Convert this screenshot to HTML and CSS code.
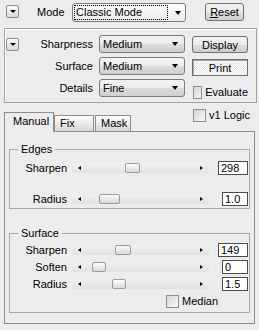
FILE: index.html
```html
<!DOCTYPE html>
<html lang="en">
<head>
    <meta charset="UTF-8">
    <meta name="viewport" content="width=device-width, initial-scale=1.0">
    <title>Sharpen</title>
    <link rel="stylesheet" href="styles.css">
</head>
<body>
    <div class="top-row">
        <button class="mini-drop"><span class="arrow-small"></span></button>
        <span class="mode-label">Mode</span>
        <div class="combo mode-combo">
            <span class="combo-text focus">Classic Mode</span>
            <span class="arrow-down"></span>
        </div>
        <button class="btn reset-btn"><u>R</u>eset</button>
    </div>

    <div class="panel">
        <button class="mini-drop panel-drop"><span class="arrow-small"></span></button>
        <div class="settings">
            <span class="set-label">Sharpness</span>
            <div class="combo"><span class="combo-text">Medium</span><span class="arrow-down"></span></div>
            <span class="set-label">Surface</span>
            <div class="combo"><span class="combo-text">Medium</span><span class="arrow-down"></span></div>
            <span class="set-label">Details</span>
            <div class="combo"><span class="combo-text">Fine</span><span class="arrow-down"></span></div>
        </div>
        <div class="side">
            <button class="btn display-btn">Display</button>
            <button class="btn print-btn">Print</button>
            <label class="check evaluate"><span class="box"></span>Evaluate</label>
        </div>
    </div>

    <div class="tab-head">
        <div class="tab active">Manual</div>
        <div class="tab fix">Fix</div>
        <div class="tab mask">Mask</div>
        <label class="check v1"><span class="box"></span>v1 Logic</label>
    </div>
    <div class="tab-page">
        <div class="group edges">
            <span class="group-title">Edges</span>
            <div class="row">
                <span class="row-label">Sharpen</span>
                <div class="slider"><span class="arr-left"></span><span class="thumb" style="left:53px;width:15px"></span><span class="arr-right"></span></div>
                <span class="value wide">298</span>
            </div>
            <div class="row radius-row">
                <span class="row-label">Radius</span>
                <div class="slider"><span class="arr-left"></span><span class="thumb" style="left:27px;width:21px"></span><span class="arr-right"></span></div>
                <span class="value">1.0</span>
            </div>
        </div>

        <div class="group surface">
            <span class="group-title">Surface</span>
            <div class="row">
                <span class="row-label">Sharpen</span>
                <div class="slider"><span class="arr-left"></span><span class="thumb" style="left:43px;width:16px"></span><span class="arr-right"></span></div>
                <span class="value wide">149</span>
            </div>
            <div class="row">
                <span class="row-label">Soften</span>
                <div class="slider"><span class="arr-left"></span><span class="thumb" style="left:20px;width:14px"></span><span class="arr-right"></span></div>
                <span class="value">0</span>
            </div>
            <div class="row">
                <span class="row-label">Radius</span>
                <div class="slider"><span class="arr-left"></span><span class="thumb" style="left:40px;width:14px"></span><span class="arr-right"></span></div>
                <span class="value">1.5</span>
            </div>
            <div class="row">
                <label class="check median"><span class="box"></span>Median</label>
            </div>
        </div>
    </div>
</body>
</html>
```

FILE: styles.css
```css
body {
    margin: 0;
    padding: 0;
    width: 259px;
    height: 330px;
    overflow: hidden;
    background: #ececec;
    font-family: "Liberation Sans", Arial, sans-serif;
    font-size: 11px;
    color: #000;
}
button {
    font-family: inherit;
    font-size: 11px;
    color: #000;
    padding: 0;
}
.top-row {
    display: flex;
    align-items: flex-start;
    height: 19px;
    padding: 3px 0 0 6px;
}
.mini-drop {
    width: 13px;
    height: 13px;
    margin-top: 2px;
    border: 1px solid #8a8a8a;
    border-radius: 2px;
    background: linear-gradient(#fbfbfb, #d9d9d9);
    display: flex;
    align-items: center;
    justify-content: center;
}
.arrow-small {
    width: 0;
    height: 0;
    border-left: 3px solid transparent;
    border-right: 3px solid transparent;
    border-top: 3px solid #000;
}
.arrow-down {
    width: 0;
    height: 0;
    border-left: 3.5px solid transparent;
    border-right: 3.5px solid transparent;
    border-top: 4px solid #000;
}
.mode-label {
    width: 35px;
    margin-left: 18px;
    line-height: 19px;
}
.combo {
    box-sizing: border-box;
    display: flex;
    align-items: center;
    border: 1px solid #7a7a7a;
    border-radius: 3px;
    background: linear-gradient(#f3f3f3 0%, #ebebeb 50%, #dcdcdc 51%, #cfcfcf 100%);
    padding: 0 6px 0 2px;
}
.combo-text {
    flex: 1;
    line-height: 13px;
    padding: 0 1px;
}
.mode-combo {
    width: 114px;
    height: 19px;
    background: linear-gradient(#fdfdfd, #eaeaea);
    padding-right: 4px;
}
.combo-text.focus {
    outline: 1px dotted #000;
    margin-right: 8px;
}
.btn {
    box-sizing: border-box;
    border: 1px solid #707070;
    border-radius: 3px;
    background: linear-gradient(#f2f2f2 0%, #ebebeb 50%, #dddddd 51%, #cfcfcf 100%);
    text-align: center;
}
.reset-btn {
    width: 39px;
    height: 18px;
    margin-left: 19px;
}
.panel {
    box-sizing: border-box;
    display: flex;
    align-items: flex-start;
    height: 75px;
    margin: 6px 2px 0 4px;
    padding: 6px 0 0 1px;
    border: 1px solid #a0a0a0;
    box-shadow: inset 1px 1px #fff;
}
.panel-drop {
    margin-top: 3px;
}
.settings {
    display: grid;
    grid-template-columns: 74px 86px;
    grid-auto-rows: 18px;
    column-gap: 6px;
    row-gap: 4px;
}
.set-label {
    text-align: right;
    line-height: 18px;
}
.side {
    display: flex;
    flex-direction: column;
    width: 56px;
    margin-left: 7px;
}
.display-btn {
    height: 17px;
    margin-top: 1px;
}
.print-btn {
    height: 17px;
    margin-top: 6px;
    border-radius: 0;
    border: 1px solid #6d6d6d;
    box-shadow: inset 1px 1px #a8a8a8;
    background: repeating-conic-gradient(#ffffff 0 25%, #e4e4e4 0 50%) 0 0 / 2px 2px;
}
.check {
    display: flex;
    align-items: center;
    line-height: 13px;
}
.box {
    box-sizing: border-box;
    width: 13px;
    height: 13px;
    margin-right: 3px;
    border: 1px solid #8e8f8f;
    background: linear-gradient(135deg, #d4d4d4, #f8f8f8);
}
.evaluate {
    margin-top: 10px;
    margin-left: 1px;
}
.tab-head {
    display: flex;
    align-items: flex-end;
    height: 28px;
    padding-left: 4px;
}
.tab {
    box-sizing: border-box;
    height: 16px;
    line-height: 14px;
    padding-left: 5px;
    border: 1px solid #8c8c8c;
    border-bottom: none;
    background: linear-gradient(#fefefe, #e6e6e6 60%, #d6d6d6);
}
.tab.active {
    position: relative;
    z-index: 1;
    width: 50px;
    height: 20px;
    margin-bottom: -1px;
    padding-left: 8px;
    line-height: 17px;
    background: #ececec;
}
.tab.fix {
    width: 40px;
}
.tab.mask {
    width: 36px;
    margin-left: 1px;
}
.v1 {
    align-self: flex-start;
    margin: 6px 0 0 62px;
}
.tab-page {
    box-sizing: border-box;
    width: 251px;
    height: 193px;
    margin-left: 4px;
    border: 1px solid #8c8c8c;
    padding-top: 17px;
}
.group {
    box-sizing: border-box;
    margin: 0 4px;
    border: 1px solid #a9a9a9;
}
.edges {
    height: 60px;
}
.surface {
    height: 80px;
    margin-top: 24px;
}
.group-title {
    display: block;
    width: max-content;
    margin: -7px 0 0 8px;
    padding: 0 3px;
    line-height: 13px;
    background: #ececec;
}
.row {
    display: flex;
    align-items: center;
    height: 14px;
    margin-top: 3px;
}
.edges .row {
    margin-top: 5px;
}
.edges .radius-row {
    margin-top: 17px;
}
.row-label {
    width: 57px;
    text-align: right;
}
.slider {
    position: relative;
    box-sizing: border-box;
    display: flex;
    align-items: center;
    justify-content: space-between;
    width: 137px;
    height: 10px;
    margin-left: 5px;
    padding: 0 6px;
    background: linear-gradient(#f0f0f0, #e2e2e2);
}
.arr-left {
    width: 0;
    height: 0;
    border-top: 2.5px solid transparent;
    border-bottom: 2.5px solid transparent;
    border-right: 3px solid #000;
}
.arr-right {
    width: 0;
    height: 0;
    border-top: 2.5px solid transparent;
    border-bottom: 2.5px solid transparent;
    border-left: 3px solid #000;
}
.thumb {
    position: absolute;
    top: 0;
    box-sizing: border-box;
    height: 10px;
    border: 1px solid #9a9a9a;
    border-radius: 2px;
    background: linear-gradient(#fbfbfb, #dadada);
}
.value {
    box-sizing: border-box;
    width: 26px;
    height: 14px;
    margin-left: auto;
    margin-right: 1px;
    padding-left: 2px;
    line-height: 12px;
    border: 1px solid #4a4a4a;
    background: #fff;
}
.value.wide {
    width: 30px;
}
.median {
    margin-left: 156px;
}
```
